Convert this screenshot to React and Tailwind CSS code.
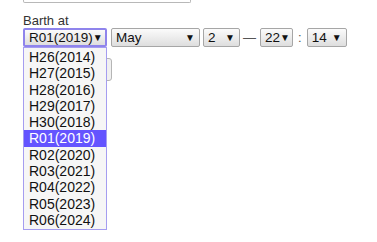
import React from 'react'

const ERAS = ['H26(2014)', 'H27(2015)', 'H28(2016)', 'H29(2017)', 'H30(2018)', 'R01(2019)', 'R02(2020)', 'R03(2021)', 'R04(2022)', 'R05(2023)', 'R06(2024)']

function Select({ value, width, focused }) {
  return (
    <div
      className={`flex items-center justify-between h-[19px] rounded-[2px] bg-gradient-to-b from-[#fbfbfb] to-[#dedede] text-[13.5px] leading-none text-[#111] ${
        focused ? 'border-2 border-[#8f84ec] pl-[4px] pr-[3px]' : 'border border-[#a6a6a6] pl-[4px] pr-[4px]'
      }`}
      style={{ width }}
    >
      <span>{value}</span>
      <span className="text-[10px]">▼</span>
    </div>
  )
}

export default function App() {
  const current = 'R01(2019)'
  return (
    <div className="relative w-[377px] h-[242px] bg-white px-[23px] font-['Liberation_Sans',Arial,sans-serif] text-[#333] overflow-hidden">
      {/* bottom of the field above */}
      <div className="w-[168px] h-[3px] border border-t-0 border-[#b8b8b8] rounded-b-[2px]" />

      <div className="mt-[10px] text-[13px] leading-[15px]">Barth at</div>

      <div className="relative flex items-center">
        <Select value={current} width={84} focused />
        <div className="ml-[4px]">
          <Select value="May" width={89} />
        </div>
        <div className="ml-[3px]">
          <Select value="2" width={37} />
        </div>
        <span className="ml-[3px] mr-[4px] text-[13px] text-[#555]">—</span>
        <Select value="22" width={33} />
        <span className="mx-[5px] text-[13px] text-[#555]">:</span>
        <Select value="14" width={40} />

        {/* open list */}
        <div className="absolute left-0 top-[19px] z-10 w-[84px] border border-[#a59df0] bg-[#f6f6f6] py-[1px]">
          {ERAS.map((e) => (
            <div
              key={e}
              className={`h-[16.3px] pl-[5px] text-[14px] leading-[16px] ${
                e === current ? 'bg-[#6454ff] text-white' : 'text-[#111]'
              }`}
            >
              {e}
            </div>
          ))}
        </div>
      </div>

      {/* button hidden behind the list */}
      <div className="mt-[10px] w-[89px] h-[23px] rounded-[3px] border border-[#b5b5b5] bg-[#f0f0f0]" />
    </div>
  )
}
